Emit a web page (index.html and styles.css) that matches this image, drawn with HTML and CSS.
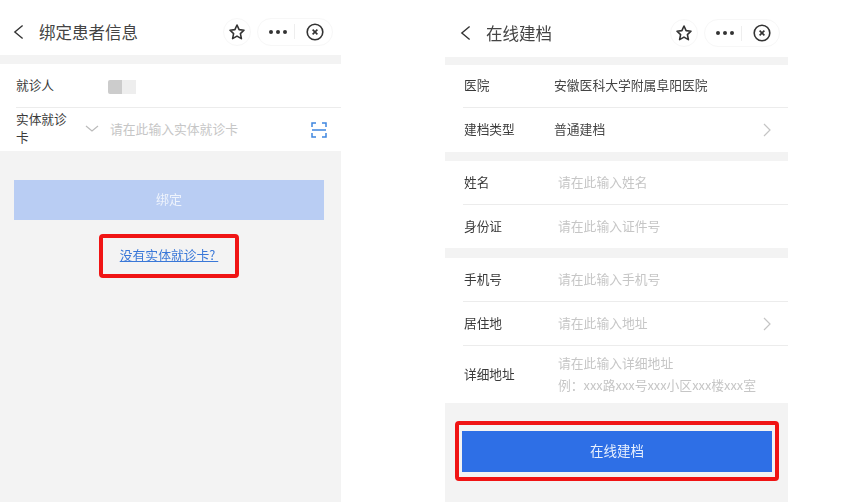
FILE: index.html
```html
<!DOCTYPE html>
<html lang="zh-CN">
<head>
    <meta charset="UTF-8">
    <meta name="viewport" content="width=device-width, initial-scale=1.0">
    <title>绑定患者信息</title>
    <link rel="stylesheet" href="styles.css">
</head>
<body>
    <div class="page">
        <div class="screen screen-bind">
            <div class="header">
                <svg class="back" viewBox="0 0 12 16"><path d="M10.5 1 L2 8 L10.5 15"/></svg>
                <div class="title">绑定患者信息</div>
                <div class="star-btn">
                    <svg viewBox="0 0 18 18"><path d="M9 2 L11.1 6.6 L16 7.2 L12.4 10.6 L13.4 15.6 L9 13.1 L4.6 15.6 L5.6 10.6 L2 7.2 L6.9 6.6 Z"/></svg>
                </div>
                <div class="capsule">
                    <div class="dots"><i></i><i></i><i></i></div>
                    <div class="capsule-line"></div>
                    <svg class="close" viewBox="0 0 18 18"><circle cx="9" cy="9" r="7.8"/><path d="M6.6 6.6 L11.4 11.4 M11.4 6.6 L6.6 11.4"/></svg>
                </div>
            </div>
            <div class="section section-top">
                <div class="row row-bind">
                    <div class="label label-bind">就诊人</div>
                    <div class="masked"><i></i><i></i></div>
                </div>
                <div class="row row-bind row-last">
                    <div class="label label-card">实体就诊卡</div>
                    <svg class="down" viewBox="0 0 14 7"><path d="M1 1 L7 6 L13 1"/></svg>
                    <div class="hint">请在此输入实体就诊卡</div>
                    <svg class="scan" viewBox="0 0 16 16"><path d="M1 5 V1 H5 M11 1 H15 V5 M1 8 H15 M1 11 V15 H5 M11 15 H15 V11"/></svg>
                </div>
            </div>
            <div class="bind-actions">
                <button class="btn btn-disabled">绑定</button>
                <div class="link-box"><a class="link" href="#">没有实体就诊卡?&nbsp;</a></div>
            </div>
        </div>

        <div class="screen screen-archive">
            <div class="header">
                <svg class="back" viewBox="0 0 12 16"><path d="M10.5 1 L2 8 L10.5 15"/></svg>
                <div class="title">在线建档</div>
                <div class="star-btn">
                    <svg viewBox="0 0 18 18"><path d="M9 2 L11.1 6.6 L16 7.2 L12.4 10.6 L13.4 15.6 L9 13.1 L4.6 15.6 L5.6 10.6 L2 7.2 L6.9 6.6 Z"/></svg>
                </div>
                <div class="capsule">
                    <div class="dots"><i></i><i></i><i></i></div>
                    <div class="capsule-line"></div>
                    <svg class="close" viewBox="0 0 18 18"><circle cx="9" cy="9" r="7.8"/><path d="M6.6 6.6 L11.4 11.4 M11.4 6.6 L6.6 11.4"/></svg>
                </div>
            </div>
            <div class="section section-top">
                <div class="row row-short">
                    <div class="label">医院</div>
                    <div class="value">安徽医科大学附属阜阳医院</div>
                </div>
                <div class="row row-flat">
                    <div class="label">建档类型</div>
                    <div class="value">普通建档</div>
                    <svg class="more" viewBox="0 0 8 14"><path d="M1 1 L7 7 L1 13"/></svg>
                </div>
            </div>
            <div class="section">
                <div class="row">
                    <div class="label">姓名</div>
                    <div class="hint hint-indent">请在此输入姓名</div>
                </div>
                <div class="row row-last">
                    <div class="label">身份证</div>
                    <div class="hint hint-indent">请在此输入证件号</div>
                </div>
            </div>
            <div class="section section-wide">
                <div class="row">
                    <div class="label">手机号</div>
                    <div class="hint hint-indent">请在此输入手机号</div>
                </div>
                <div class="row">
                    <div class="label">居住地</div>
                    <div class="hint hint-indent">请在此输入地址</div>
                    <svg class="more" viewBox="0 0 8 14"><path d="M1 1 L7 7 L1 13"/></svg>
                </div>
                <div class="row row-address">
                    <div class="label">详细地址</div>
                    <div class="hint hint-indent">请在此输入详细地址<br>例：xxx路xxx号xxx小区xxx楼xxx室</div>
                </div>
            </div>
            <div class="submit-box">
                <button class="btn btn-primary">在线建档</button>
            </div>
        </div>
    </div>
</body>
</html>
```

FILE: styles.css
```css
* {
    box-sizing: border-box;
}

body {
    margin: 0;
    background-color: #fff;
    font-family: "Noto Sans CJK SC", "Noto Sans", sans-serif;
    color: #3a3a3a;
}

.page {
    display: flex;
    gap: 104px;
    height: 502px;
    overflow: hidden;
    filter: blur(0.35px);
}

.screen {
    width: 341px;
    background-color: #f3f3f3;
}

.screen-archive {
    width: 343px;
}

.header {
    display: flex;
    align-items: center;
    height: 55px;
    padding: 8px 8px 0 13px;
    background-color: #fff;
}

.screen-archive .header {
    height: 57px;
    padding: 9px 8px 0 15px;
}

.back {
    width: 11px;
    height: 16px;
    fill: none;
    stroke: #333;
    stroke-width: 1.5;
}

.title {
    flex: 1;
    margin-left: 15px;
    font-size: 16.5px;
    color: #444;
}

.star-btn {
    display: flex;
    align-items: center;
    justify-content: center;
    width: 28px;
    height: 28px;
    border: 1px solid #f7f7f7;
    border-radius: 50%;
}

.star-btn svg {
    width: 18px;
    height: 18px;
    fill: none;
    stroke: #333;
    stroke-width: 1.6;
    stroke-linejoin: round;
}

.capsule {
    display: flex;
    align-items: center;
    width: 76px;
    height: 28px;
    margin-left: 6px;
    padding-left: 11px;
    border: 1px solid #f7f7f7;
    border-radius: 14px;
}

.dots {
    display: flex;
    gap: 3px;
}

.dots i {
    width: 4px;
    height: 4px;
    border-radius: 50%;
    background-color: #333;
}

.capsule-line {
    width: 1px;
    height: 15px;
    margin-left: 7px;
    background-color: #eee;
}

.close {
    width: 18px;
    height: 18px;
    margin-left: 11px;
    fill: none;
    stroke: #333;
    stroke-width: 1.6;
}

.section {
    margin-top: 9px;
    background-color: #fff;
}

.section-top {
    margin-top: 8px;
}

.section-wide {
    margin-top: 10px;
}

.screen-bind .section-top {
    margin-top: 9px;
}

.row {
    display: flex;
    align-items: center;
    height: 44px;
    margin-left: 18px;
    padding-bottom: 3px;
    border-bottom: 1px solid #ececec;
    font-size: 12.8px;
}

.row-bind {
    margin-left: 16px;
}

.row-short {
    height: 43px;
}

.row-flat {
    border-bottom: none;
}

.row-last {
    height: 43px;
    border-bottom: none;
}

.row-address {
    height: 57px;
    padding-bottom: 2px;
    border-bottom: none;
}

.label {
    flex: none;
    width: 91px;
    padding-left: 1px;
    font-size: 12.7px;
}

.label-bind {
    width: 92px;
    padding-left: 0;
}

.label-card {
    width: 56px;
    padding-left: 0;
    line-height: 18px;
}

.value {
    flex: 1;
    color: #444;
}

.hint {
    flex: 1;
    font-size: 12.8px;
    color: #c6c6c6;
}

.hint-indent {
    margin: 2px 0 0 4px;
    line-height: 22px;
}

.row-address .hint-indent {
    margin-top: 0;
}

.masked {
    display: flex;
    margin-top: 5px;
}

.masked i {
    width: 14px;
    height: 14px;
    background-color: #eee;
}

.masked i:first-child {
    background-color: #ccc;
    border-radius: 2px 0 0 2px;
}

.down {
    flex: none;
    width: 14px;
    height: 7px;
    margin: 0 11px 0 13px;
    fill: none;
    stroke: #bbb;
    stroke-width: 1.2;
}

.scan {
    flex: none;
    width: 16px;
    height: 16px;
    margin: 3px 14px 0 0;
    fill: none;
    stroke: #3f86e0;
    stroke-width: 1.5;
}

.more {
    flex: none;
    width: 8px;
    height: 14px;
    margin: 3px 17px 0 0;
    fill: none;
    stroke: #c4c4c4;
    stroke-width: 1.2;
}

.bind-actions {
    display: flex;
    flex-direction: column;
    align-items: center;
    padding: 29px 17px 0 14px;
}

.btn {
    display: block;
    width: 100%;
    height: 40px;
    padding: 0 0 4px;
    border: none;
    font-family: inherit;
    font-size: 13px;
    color: #fff;
}

.btn-disabled {
    background-color: #b9cdf3;
    color: #eef3fc;
}

.btn-primary {
    height: 41px;
    background-color: #2e6fe6;
    font-size: 13.5px;
    color: #e8f0fd;
}

.link-box {
    display: flex;
    align-items: center;
    justify-content: center;
    width: 140px;
    height: 44px;
    margin-top: 14px;
    padding-bottom: 4px;
    border: 4px solid #f01414;
    border-radius: 4px;
}

.link {
    font-size: 12.8px;
    color: #3a78d8;
}

.submit-box {
    width: 324px;
    height: 60px;
    margin: 18px 0 0 10px;
    padding: 6px 3px 0;
    border: 4px solid #f01414;
    border-radius: 4px;
}
```
